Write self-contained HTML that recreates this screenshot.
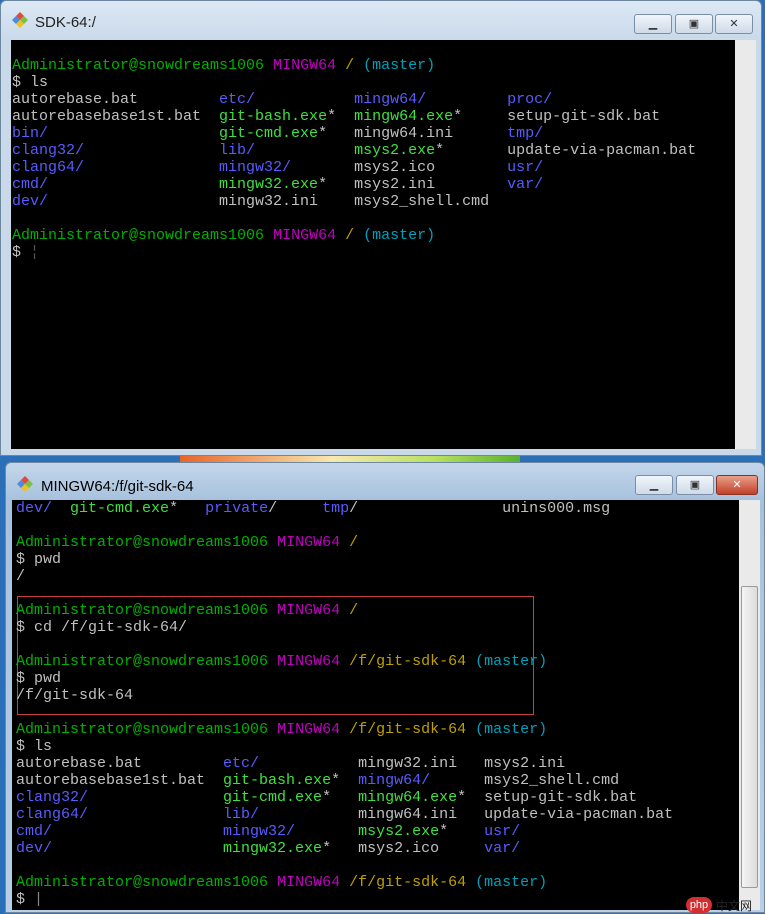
<!DOCTYPE html>
<html><head><meta charset="utf-8"><style>
*{margin:0;padding:0;box-sizing:border-box}
body{width:765px;height:913px;overflow:hidden;background:#2a6fb8;position:relative;font-family:"Liberation Sans",sans-serif}
.win{position:absolute;border:1px solid #6d879e;border-radius:6px 6px 0 0}
.t{position:absolute;font-family:"Liberation Mono",monospace;font-size:15px;line-height:17px;white-space:pre;color:#c0c0c0;letter-spacing:0}
.g{color:#00b000}.m{color:#c000c0}.y{color:#c0a000}.c{color:#00a0b8}.b{color:#5a5aff}.e{color:#40e040}
.title{position:absolute;font-size:15px;color:#000}
.btn{position:absolute;top:0;height:20px;border:1px solid #7a8ea6;border-radius:3px;background:linear-gradient(#f0f5fb,#cfdbe8);text-align:center;font-size:11px;line-height:18px;color:#333}
.sb{position:absolute;background:#eaeaea}
</style></head><body>
<div style="position:absolute;left:180px;top:455px;width:340px;height:10px;background:linear-gradient(90deg,#e8642a,#f8e8b0 45%,#b8e060 75%,#5cb030)"></div>
<!-- top window -->
<div class="win" style="left:0;top:0;width:762px;height:456px;background:linear-gradient(#dce8f4,#c9d9ea 40px,#c9d9ea)">
 <div style="position:absolute;left:11px;top:11px;width:16px;height:16px;"><svg width="16" height="16"><path d="M8 0L12 4L8 8L4 4Z" fill="#e04a3a"/><path d="M4 4L8 8L4 12L0 8Z" fill="#4a8ae0"/><path d="M12 4L16 8L12 12L8 8Z" fill="#7cc040"/><path d="M8 8L12 12L8 16L4 12Z" fill="#f0c020"/></svg></div>
 <div class="title" style="left:34px;top:13px;color:#222">SDK-64:/</div>
 <div class="btn" style="left:633px;top:13px;width:38px">▁</div>
 <div class="btn" style="left:674px;top:13px;width:38px">▣</div>
 <div class="btn" style="left:714px;top:13px;width:38px">✕</div>
 <div style="position:absolute;left:10px;top:39px;width:724px;height:409px;background:#000"></div>
 <div class="sb" style="left:734px;top:39px;width:21px;height:409px"></div>
</div>
<div class="t" style="left:12px;top:57px"><span class="g">Administrator@snowdreams1006</span> <span class="m">MINGW64</span> <span class="y">/</span> <span class="c">(master)</span>
$ ls
autorebase.bat         <span class="b">etc/</span>           <span class="b">mingw64/</span>         <span class="b">proc/</span>
autorebasebase1st.bat  <span class="e">git-bash.exe</span>*  <span class="e">mingw64.exe</span>*     setup-git-sdk.bat
<span class="b">bin/</span>                   <span class="e">git-cmd.exe</span>*   mingw64.ini      <span class="b">tmp/</span>
<span class="b">clang32/</span>               <span class="b">lib/</span>           <span class="e">msys2.exe</span>*       update-via-pacman.bat
<span class="b">clang64/</span>               <span class="b">mingw32/</span>       msys2.ico        <span class="b">usr/</span>
<span class="b">cmd/</span>                   <span class="e">mingw32.exe</span>*   msys2.ini        <span class="b">var/</span>
<span class="b">dev/</span>                   mingw32.ini    msys2_shell.cmd

<span class="g">Administrator@snowdreams1006</span> <span class="m">MINGW64</span> <span class="y">/</span> <span class="c">(master)</span>
$ <span style="color:#555">¦</span></div>
<!-- bottom window -->
<div class="win" style="left:5px;top:462px;width:760px;height:451px;background:linear-gradient(#c4d6ea,#a8c2de 36px,#b8cfe6)">
 <div style="position:absolute;left:11px;top:13px;width:16px;height:16px;"><svg width="16" height="16"><path d="M8 0L12 4L8 8L4 4Z" fill="#e04a3a"/><path d="M4 4L8 8L4 12L0 8Z" fill="#4a8ae0"/><path d="M12 4L16 8L12 12L8 8Z" fill="#7cc040"/><path d="M8 8L12 12L8 16L4 12Z" fill="#f0c020"/></svg></div>
 <div class="title" style="left:35px;top:15px">MINGW64:/f/git-sdk-64</div>
 <div class="btn" style="left:629px;top:12px;width:38px">▁</div>
 <div class="btn" style="left:670px;top:12px;width:38px">▣</div>
 <div class="btn" style="left:710px;top:12px;width:42px;background:linear-gradient(#e8a08a,#c2402a);color:#fff;border-color:#8a3020">✕</div>
 <div style="position:absolute;left:6px;top:37px;width:727px;height:410px;background:#000"></div>
 <div class="sb" style="left:733px;top:37px;width:21px;height:410px"></div>
 <div style="position:absolute;left:735px;top:123px;width:17px;height:302px;background:linear-gradient(90deg,#f4f4f4,#dcdcdc);border:1px solid #9a9a9a;border-radius:2px"></div>
</div>
<div style="position:absolute;left:17px;top:596px;width:517px;height:119px;border:1px solid #c84040"></div>
<div class="t" style="left:16px;top:500px"><span class="b">dev/</span>  <span class="e">git-cmd.exe</span>*   <span class="b">private</span>/     <span class="b">tmp</span>/                <span>unins000.msg</span>

<span class="g">Administrator@snowdreams1006</span> <span class="m">MINGW64</span> <span class="y">/</span>
$ pwd
/

<span class="g">Administrator@snowdreams1006</span> <span class="m">MINGW64</span> <span class="y">/</span>
$ cd /f/git-sdk-64/

<span class="g">Administrator@snowdreams1006</span> <span class="m">MINGW64</span> <span class="y">/f/git-sdk-64</span> <span class="c">(master)</span>
$ pwd
/f/git-sdk-64

<span class="g">Administrator@snowdreams1006</span> <span class="m">MINGW64</span> <span class="y">/f/git-sdk-64</span> <span class="c">(master)</span>
$ ls
autorebase.bat         <span class="b">etc/</span>           mingw32.ini   msys2.ini
autorebasebase1st.bat  <span class="e">git-bash.exe</span>*  <span class="b">mingw64/</span>      msys2_shell.cmd
<span class="b">clang32/</span>               <span class="e">git-cmd.exe</span>*   <span class="e">mingw64.exe</span>*  setup-git-sdk.bat
<span class="b">clang64/</span>               <span class="b">lib/</span>           mingw64.ini   update-via-pacman.bat
<span class="b">cmd/</span>                   <span class="b">mingw32/</span>       <span class="e">msys2.exe</span>*    <span class="b">usr/</span>
<span class="b">dev/</span>                   <span class="e">mingw32.exe</span>*   msys2.ico     <span class="b">var/</span>

<span class="g">Administrator@snowdreams1006</span> <span class="m">MINGW64</span> <span class="y">/f/git-sdk-64</span> <span class="c">(master)</span>
$ <span style="color:#888">|</span></div>
<div style="position:absolute;left:686px;top:897px;width:26px;height:16px;background:#d23030;border-radius:8px;color:#fff;font-size:11px;text-align:center;line-height:16px">php</div>
<div style="position:absolute;left:716px;top:897px;font-size:12px;color:#222">中文网</div>
</body></html>
